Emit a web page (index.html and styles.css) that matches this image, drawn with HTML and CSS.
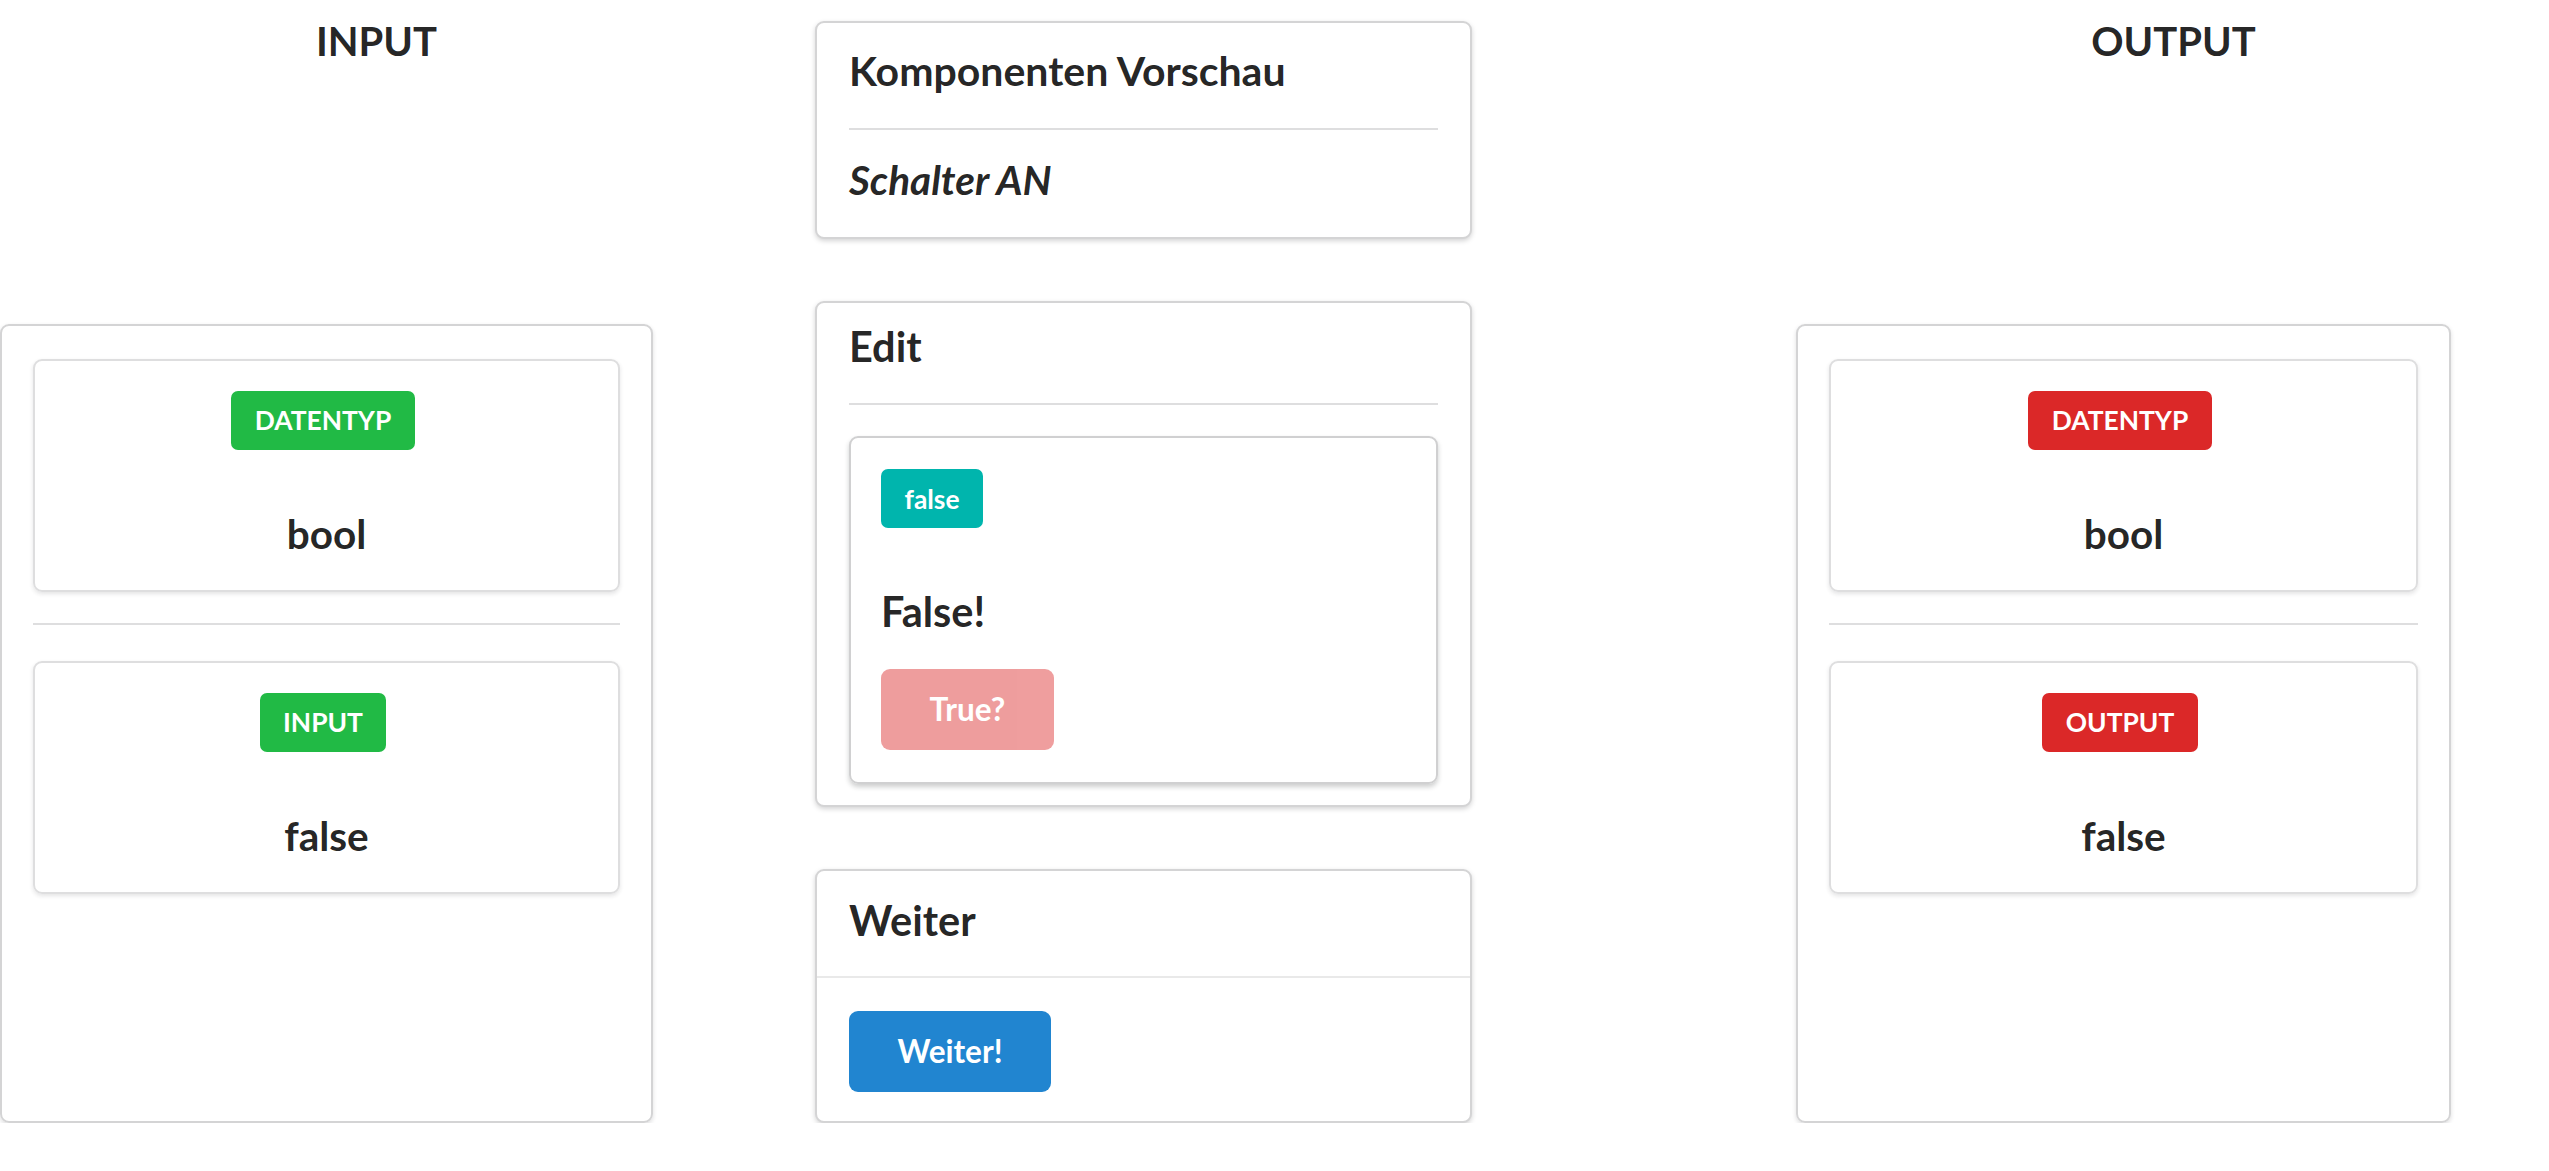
FILE: index.html
```html
<!DOCTYPE html>
<html lang="de">
<head>
<meta charset="utf-8">
<title>Komponenten Vorschau</title>
<link rel="stylesheet" href="styles.css">
</head>
<body>
<div class="layout">
  <section class="side side-left">
    <h2 class="col-title">INPUT</h2>
    <div class="panel">
      <div class="value-card">
        <span class="tag tag-green">DATENTYP</span>
        <div class="value">bool</div>
      </div>
      <hr class="divider panel-divider">
      <div class="value-card">
        <span class="tag tag-green">INPUT</span>
        <div class="value">false</div>
      </div>
    </div>
  </section>

  <section class="center">
    <div class="card preview">
      <div class="card-title">Komponenten Vorschau</div>
      <hr class="divider preview-divider">
      <div class="card-sub">Schalter AN</div>
    </div>

    <div class="card edit">
      <div class="card-title">Edit</div>
      <hr class="divider edit-divider">
      <div class="raised">
        <span class="tag tag-teal">false</span>
        <div class="state">False!</div>
        <button class="btn btn-red" disabled>True?</button>
      </div>
    </div>

    <div class="card next">
      <div class="next-head">
        <div class="card-title">Weiter</div>
      </div>
      <div class="next-body">
        <button class="btn btn-blue">Weiter!</button>
      </div>
    </div>
  </section>

  <section class="side side-right">
    <h2 class="col-title">OUTPUT</h2>
    <div class="panel">
      <div class="value-card">
        <span class="tag tag-red">DATENTYP</span>
        <div class="value">bool</div>
      </div>
      <hr class="divider panel-divider">
      <div class="value-card">
        <span class="tag tag-red">OUTPUT</span>
        <div class="value">false</div>
      </div>
    </div>
  </section>
</div>
</body>
</html>
```

FILE: styles.css
```css
* { box-sizing: border-box; }

html, body {
  margin: 0;
  padding: 0;
  background: #ffffff;
}

body {
  font-family: Lato, "Helvetica Neue", Arial, sans-serif;
  font-size: 30.8px;
  color: rgba(0, 0, 0, 0.87);
}

.layout {
  display: flex;
  align-items: stretch;
}

/* side columns */
.side {
  display: flex;
  flex-direction: column;
}

.side-left {
  width: 653px;
}

.side-right {
  width: 655px;
  margin-left: 324px;
}

.col-title {
  margin: 15.8px 0 0;
  padding-left: 100px;
  text-align: center;
  font-size: 40px;
  line-height: 51.4px;
  font-weight: 700;
}

.panel {
  flex: 1;
  margin-top: 256.8px;
  border: 2px solid #d4d4d5;
  border-radius: 9px;
  box-shadow: 0 2px 4px rgba(34, 36, 38, 0.15);
  padding: 33px 31px;
}

.value-card {
  display: flex;
  flex-direction: column;
  align-items: center;
  border: 2px solid #dededf;
  border-radius: 9px;
  box-shadow: 0 2px 4px rgba(34, 36, 38, 0.12);
  padding: 30px 31px 30.5px;
}

.value-card .tag {
  margin-right: 7px;
}

.value {
  margin-top: 58.3px;
  font-size: 40.5px;
  line-height: 51.4px;
  font-weight: 700;
}

.divider {
  height: 0;
  border: none;
  border-top: 2px solid #dededf;
}

.panel-divider {
  margin: 31px 0 35.5px;
}

/* labels */
.tag {
  display: inline-block;
  font-size: 26.4px;
  line-height: 1;
  font-weight: 700;
  color: #ffffff;
  padding: 16.3px 23.5px;
  border-radius: 7px;
}

.tag-green { background: #21ba45; }
.tag-red { background: #db2828; }
.tag-teal { background: #00b5ad; }

/* center column */
.center {
  width: 657px;
  margin-left: 162px;
  padding-top: 21px;
}

.card {
  border: 2px solid #d4d4d5;
  border-radius: 9px;
  box-shadow: 0 2px 5px #d4d4d5;
  background: #ffffff;
}

.card + .card {
  margin-top: 62px;
}

.card-title {
  font-size: 41px;
  line-height: 51.4px;
  font-weight: 700;
}

.next .card-title,
.edit .card-title {
  font-size: 41.5px;
}

.card-sub {
  font-size: 40.5px;
  line-height: 51.4px;
  font-weight: 700;
  font-style: italic;
}

.preview {
  padding: 22.3px 32px 31.3px;
}

.preview-divider {
  margin: 31.3px 0 24.3px;
}

.edit {
  padding: 18px 32px 21px;
}

.edit-divider {
  margin: 31px 0 31px;
}

.raised {
  display: flex;
  flex-direction: column;
  align-items: flex-start;
  border: 2px solid #d0d0d1;
  border-radius: 9px;
  box-shadow: 0 3px 5px rgba(34, 36, 38, 0.22);
  padding: 31px 30px 32px;
}

.state {
  margin-top: 57.5px;
  font-size: 41.5px;
  line-height: 51.4px;
  font-weight: 700;
}

.btn {
  font-family: inherit;
  font-size: 31.5px;
  font-weight: 700;
  line-height: 1;
  padding: 24.5px 48.5px;
  border: 0;
  border-radius: 9px;
  color: #ffffff;
  cursor: pointer;
}

.btn-red {
  margin-top: 31.8px;
  background: #db2828;
  opacity: 0.45;
  cursor: default;
}

.btn-blue {
  background: #2185d0;
}

.next-head {
  padding: 24.8px 32px 28.8px;
}

.next-body {
  border-top: 2px solid #e9e9e9;
  padding: 33.5px 32px 29.5px;
}
```
